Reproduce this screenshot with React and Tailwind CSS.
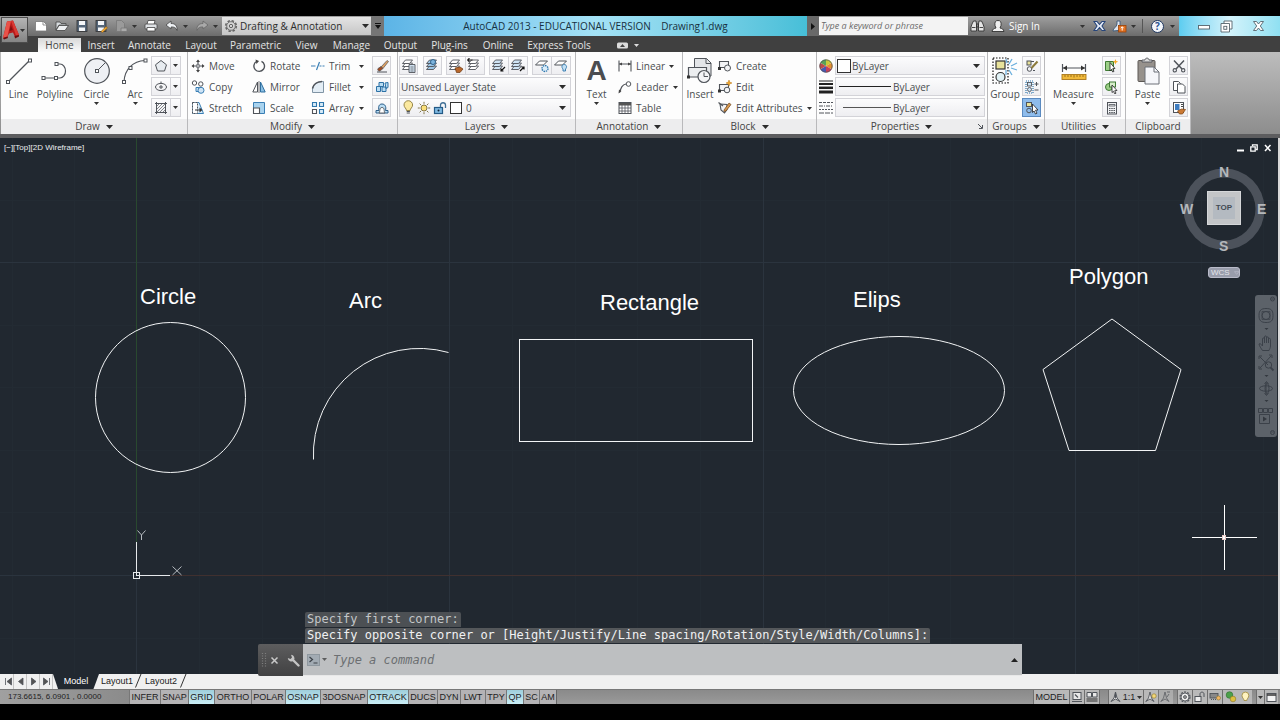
import React from "react";

/* ---------- shared pieces ---------- */

function Ico({ w = 14, h = 14, children, className = "" }) {
  return (
    <svg
      width={w}
      height={h}
      viewBox={`0 0 ${w} ${h}`}
      fill="none"
      stroke="#50545a"
      strokeWidth="1.2"
      className={`shrink-0 ${className}`}
      aria-hidden="true"
    >
      {children}
    </svg>
  );
}

function Caret({ size = "sm", className = "" }) {
  return size === "sm" ? (
    <svg width="5" height="3" viewBox="0 0 5 3" className={`shrink-0 ${className}`} aria-hidden="true">
      <path d="M0 0h5L2.500 3z" fill="#333" />
    </svg>
  ) : (
    <svg width="7" height="4" viewBox="0 0 7 4" className={`shrink-0 ${className}`} aria-hidden="true">
      <path d="M0 0h7L3.500 4z" fill="#2b2b2b" />
    </svg>
  );
}

function Panel({ title, className = "", caret = true, launcher = false, children }) {
  return (
    <section className={`flex shrink-0 flex-col border-r border-[#b9b9bb] ${className}`}>
      <div className="flex h-[67px] bg-[#fdfdfd] pt-1">{children}</div>
      <div className="flex h-[15px] items-center justify-center gap-1.5 bg-[#ededee] text-[10px] leading-[15px] text-[#444]">
        {launcher && <span className="w-2" />}
        <span className={launcher ? "ml-auto" : ""}>{title}</span>
        {caret && <Caret size="md" />}
        {launcher && (
          <button aria-label="Properties palette" className="mr-1 ml-auto">
            <Ico w={5} h={5}><path d="M0 0l4 4M4.500 1v3.500h-3.500" strokeWidth="1" /></Ico>
          </button>
        )}
      </div>
    </section>
  );
}

function Big({ label, className = "", arrow = false, children }) {
  return (
    <button className={`flex shrink-0 flex-col items-center text-[#4a4d50] ${className}`}>
      <span className="flex h-[30px] items-center justify-center">{children}</span>
      <span className="text-[10px] leading-4">{label}</span>
      {arrow && <Caret />}
    </button>
  );
}

function Row({ label, arrow = false, arrowClass = "mr-2", className = "", children }) {
  return (
    <button className={`flex h-5 items-center text-left text-[10px] whitespace-nowrap text-[#4a4d50] ${className}`}>
      <span className="mr-1 flex w-[15px] justify-center">{children}</span>
      {label}
      {arrow && <Caret className={`ml-auto ${arrowClass}`} />}
    </button>
  );
}

function Box({ label, active = false, className = "w-[19px]", children }) {
  const tone = active
    ? "border-[#5a8ac0] bg-[#8ebcec]"
    : "border-[#d3d3d8] bg-linear-to-b from-[#fcfcfd] to-[#eeeef1]";
  return (
    <button
      aria-label={label}
      title={label}
      className={`flex h-[19px] shrink-0 items-center justify-center border ${tone} ${className}`}
    >
      {children}
    </button>
  );
}

function Combo({ label, value, className = "", before }) {
  return (
    <label className={`flex h-[19px] items-center border border-[#d3d3d8] bg-linear-to-b from-[#fcfcfd] to-[#eeeef1] ${className}`}>
      {before}
      <select
        aria-label={label}
        className="min-w-0 flex-1 appearance-none bg-transparent text-[10px] leading-4 text-[#4a4d50] outline-none"
      >
        <option>{value}</option>
      </select>
      <Caret size="md" className="mr-1" />
    </label>
  );
}

const Node = ({ x, y }) => <rect x={x - 1.5} y={y - 1.5} width="3" height="3" fill="#fff" strokeWidth="1" />;

const Sheets = ({ children, fill = "#fff" }) => (
  <Ico w={16} h={16}>
    <g strokeWidth="0.900" fill={fill}>
      <path d="M1.500 11.500l3-3.500h7l-3 3.500z" />
      <path d="M1.500 8.500l3-3.500h7l-3 3.500z" />
      <path d="M1.500 5.500l3-3.500h7l-3 3.500z" />
    </g>
    {children}
  </Ico>
);

/* ---------- title bar ---------- */

function TitleBar() {
  return (
    <header className="flex h-5 items-stretch bg-linear-to-b from-[#a0a0a0] to-[#6c6c6c] text-[10px]">
      <div className="flex shrink-0 items-center gap-[7px] pl-[34px] text-white">
        <button aria-label="New">
          <Ico w={14} h={14}><path d="M1.500 2.500h8l3 3v6.500h-11z" fill="#fff" stroke="#777" strokeWidth="0.800" /><path d="M9 2.500v3.500h4" stroke="#777" strokeWidth="0.800" /></Ico>
        </button>
        <button aria-label="Open">
          <Ico w={14} h={14}><path d="M1 11V3h4l1 1.500h5V6H4z" fill="#d8dcdf" stroke="#444" strokeWidth="0.800" /><path d="M1 11.500l3-5h9.500l-3.500 5z" fill="#eef0f2" stroke="#444" strokeWidth="0.800" /></Ico>
        </button>
        <button aria-label="Save">
          <Ico w={12} h={14}><rect x="1" y="1.500" width="10" height="11" fill="#556679" stroke="#333" strokeWidth="0.800" /><path d="M3 2h6v4H3zM3 8.500h6v3.500H3z" fill="#f4f6f8" stroke="none" /></Ico>
        </button>
        <button aria-label="Save as">
          <Ico w={13} h={14}><rect x="1" y="1.500" width="10" height="11" fill="#556679" stroke="#333" strokeWidth="0.800" /><path d="M3 2h6v4H3zM3 8.500h6v3.500H3z" fill="#f4f6f8" stroke="none" /><path d="M6 12.500l5-5 1.500 1.500-5 4.500z" fill="#f1a830" stroke="#805010" strokeWidth="0.500" /></Ico>
        </button>
        <button aria-label="Cloud" className="flex items-center gap-1">
          <Ico w={13} h={14}><path d="M1.500 1.500h5l3 3v8h-8z" fill="#9a9a9a" stroke="#777" strokeWidth="0.800" /><path d="M6 9h6v3.500H6z" fill="#aaa" stroke="#777" strokeWidth="0.800" /></Ico>
          <Caret />
        </button>
        <button aria-label="Print">
          <Ico w={14} h={14}><path d="M4 1.500h7l-1 4H3z" fill="#fff" stroke="#444" strokeWidth="0.800" /><rect x="1" y="5" width="12" height="5" rx="1" fill="#dfe2e5" stroke="#444" strokeWidth="0.800" /><path d="M3 8.500h8V12H3z" fill="#fff" stroke="#444" strokeWidth="0.800" /></Ico>
        </button>
        <button aria-label="Undo" className="flex items-center gap-1">
          <Ico w={14} h={14}><path d="M1 6l5-4v2.500c4 0 6.500 2 6 7-1-3-3-3.700-6-3.500V10z" fill="#eef1f4" stroke="#444" strokeWidth="0.800" /></Ico>
          <Caret />
        </button>
        <button aria-label="Redo" className="flex items-center gap-1">
          <Ico w={14} h={14}><path d="M13 6L8 2v2.500c-4 0-6.500 2-6 7 1-3 3-3.700 6-3.500V10z" fill="#a9a9a9" stroke="#666" strokeWidth="0.800" /></Ico>
          <Caret />
        </button>
      </div>
      <label className="my-px ml-1 flex w-[149px] shrink-0 items-center bg-linear-to-b from-[#e4e4e4] to-[#c6c6c6] px-0.5 text-[#2d2d2d]">
        <Ico w={14} h={14}>
          <circle cx="7" cy="7" r="5.300" stroke="#666" strokeWidth="1.600" strokeDasharray="2.400 1.760" />
          <circle cx="7" cy="7" r="4.300" stroke="#666" strokeWidth="0.900" />
          <circle cx="7" cy="7" r="1.700" stroke="#555" strokeWidth="0.900" />
        </Ico>
        <select aria-label="Workspace" className="min-w-0 flex-1 appearance-none bg-transparent pl-0.5 text-[10px] outline-none">
          <option>Drafting &amp; Annotation</option>
        </select>
        <Caret size="md" />
      </label>
      <button aria-label="Customize toolbar" className="flex w-[13px] shrink-0 items-center justify-center bg-[#757575]">
        <svg width="6" height="7" viewBox="0 0 6 7" aria-hidden="true"><path d="M0 0h6v1H0zM0 2h6L3 6z" fill="#111" /></svg>
      </button>
      <div className="flex flex-1 items-center justify-center bg-linear-to-r from-[#5cb4e6] via-[#a4e2f6] to-[#46bfd8] whitespace-pre text-[#173040]">
        <h1 className="text-[10px]">AutoCAD 2013 - EDUCATIONAL VERSION{"    "}Drawing1.dwg</h1>
      </div>
      <button aria-label="Expand search" className="flex w-3 shrink-0 items-center justify-center bg-[#696969]">
        <svg width="4" height="7" viewBox="0 0 4 7" aria-hidden="true"><path d="M0 0v7l4-3.500z" fill="#111" /></svg>
      </button>
      <input
        aria-label="Search help"
        placeholder="Type a keyword or phrase"
        className="my-px w-[149px] shrink-0 bg-[#f3f3f3] px-0.5 text-[9px] italic outline-none placeholder:text-[#6b6b6b]"
      />
      <div className="flex shrink-0 items-center pl-0.5 text-white">
        <button aria-label="Search">
          <Ico w={15} h={14}>
            <path d="M2 5l1.500-3h2.500l.5 3v7H1V8zM13 5l-1.500-3H9l-.5 3v7H14V8z" fill="#e4e4e4" stroke="#333" strokeWidth="0.900" />
            <path d="M6.500 5h2v3h-2zM2 8.500h3.500M9.500 8.500H13" stroke="#333" strokeWidth="0.900" />
          </Ico>
        </button>
        <button className="ml-1.5 flex items-center gap-1 text-[10px] whitespace-nowrap">
          <Ico w={14} h={14}>
            <path d="M1 12.500c.5-2.500 2-3 4-3.500L4 6.500C3.500 3 4.500 1.500 7 1.500s3.500 1.500 3 5L9 9c2 .500 3.500 1 4 3.500z" fill="#f0f0f0" stroke="#333" strokeWidth="0.900" />
          </Ico>
          Sign In
          <Caret className="ml-9" />
        </button>
        <button aria-label="Exchange" className="ml-2">
          <Ico w={13} h={14}><path d="M1 2.500h3l2.500 3 2.500-3h3L9 7l3 4.500H9l-2.500-3-2.500 3H1L4 7z" fill="#e6edf8" stroke="#27457a" strokeWidth="1.100" /></Ico>
        </button>
        <button aria-label="Autodesk 360" className="ml-1.5 flex items-center gap-1">
          <Ico w={15} h={14}>
            <path d="M1 12c0-3 4-4 4-7V2h3v5l3 4z" fill="#dfe6ee" stroke="#3c5878" strokeWidth="0.900" />
            <rect x="6.500" y="6.500" width="7.500" height="6.500" fill="#e27222" stroke="#9b4308" strokeWidth="0.800" />
            <path d="M10.200 8v3.500M8.800 9.200l1.400-1.500 1.400 1.500" stroke="#fff" strokeWidth="1" />
          </Ico>
          <Caret />
        </button>
        <span className="mr-2 ml-1.5 h-3.5 w-px bg-[#555]" />
        <button aria-label="Help" className="flex items-center gap-1.5">
          <span className="flex size-[13px] items-center justify-center rounded-full border border-[#20375f] bg-[#f3f6fb] text-[10px] leading-none font-bold text-[#2a5292]">?</span>
          <Caret />
        </button>
      </div>
      <div className="ml-1 flex w-[101px] shrink-0 items-center justify-end bg-linear-to-r from-[#5ccdf0] via-[#d3f3fb] to-[#8fe0f2]">
        <button aria-label="Minimize" className="flex w-6 items-center justify-center">
          <Ico w={12} h={12}><rect x="0.500" y="5.500" width="11" height="3.500" fill="#fff" stroke="#55636c" strokeWidth="0.900" /></Ico>
        </button>
        <button aria-label="Restore" className="flex w-5 items-center justify-center">
          <Ico w={13} h={13}>
            <path d="M4 1h8v8H4z" fill="#fff" stroke="#55636c" strokeWidth="0.900" />
            <path d="M1 3.500h8.500V12H1z" fill="#fff" stroke="#55636c" strokeWidth="0.900" />
            <rect x="3.800" y="6.300" width="3" height="3" stroke="#55636c" strokeWidth="0.900" />
          </Ico>
        </button>
        <button aria-label="Close" className="flex w-11 items-center justify-center">
          <Ico w={13} h={12}>
            <path d="M1.500 1.500h3l2 2.500 2-2.500h3L8.300 6l3.200 4.500h-3l-2-2.500-2 2.500h-3L4.700 6z" fill="#fff" stroke="#55636c" strokeWidth="0.900" />
          </Ico>
        </button>
      </div>
    </header>
  );
}

/* ---------- menu tabs ---------- */

const MENU = [
  ["Insert", "w-[40px]"],
  ["Annotate", "w-[57px]"],
  ["Layout", "w-[46px]"],
  ["Parametric", "w-[63px]"],
  ["View", "w-[39px]"],
  ["Manage", "w-[51px]"],
  ["Output", "w-[47px]"],
  ["Plug-ins", "w-[51px]"],
  ["Online", "w-[46px]"],
  ["Express Tools", "w-[76px]"],
];

function MenuTabs() {
  return (
    <nav className="flex h-4 items-end bg-[#404040] pl-[38px] text-[10px] leading-[14px] text-[#e4e4e4]">
      <button className="h-3.5 w-[43px] bg-linear-to-b from-[#d8d8d8] to-[#fbfbfb] text-[#444]">Home</button>
      {MENU.map(([name, w]) => (
        <button key={name} className={`h-3.5 text-center whitespace-nowrap ${w}`}>{name}</button>
      ))}
      <button aria-label="Minimize ribbon" className="ml-5 flex h-3.5 items-center gap-1.5">
        <Ico w={11} h={7}><rect width="11" height="6" y="0.500" rx="1.500" fill="#dcdcdc" stroke="none" /><path d="M3 5l2.500-3L8 5z" fill="#444" stroke="none" /></Ico>
        <svg width="5" height="3" viewBox="0 0 5 3" aria-hidden="true"><path d="M0 0h5L2.500 3z" fill="#ddd" /></svg>
      </button>
    </nav>
  );
}

/* ---------- ribbon ---------- */

function DropBox({ label, children }) {
  return (
    <div className="flex">
      <Box label={label} className="w-5">{children}</Box>
      <Box label={`${label} options`} className="-ml-px w-[11px]"><Caret /></Box>
    </div>
  );
}

function Ribbon() {
  return (
    <div className="border-b-4 border-[#5d5d5f]">
      <div className="flex bg-linear-to-b from-[#bdbdbd] to-[#8d8d8d] pl-px">
        <Panel title="Draw" className="w-[187px]">
          <Big label="Line" className="w-[35px]">
            <Ico w={28} h={28}><path d="M3.500 24.500l21-21" /><Node x={3} y={25} /><Node x={25} y={3.5} /></Ico>
          </Big>
          <Big label="Polyline" className="w-[38px]">
            <Ico w={28} h={28}><path d="M2 21h17a5.500 7 0 0 0 0-14h-3" /><Node x={2.5} y={21} /><Node x={15} y={21} /><Node x={15.5} y={7} /></Ico>
          </Big>
          <Big label="Circle" arrow className="w-[45px]">
            <Ico w={28} h={28}><circle cx="14" cy="14" r="12.300" fill="#eef0f4" /><path d="M14 14l8-8" strokeWidth="1" /><Node x={14} y={14} /></Ico>
          </Big>
          <Big label="Arc" arrow className="w-[32px]">
            <Ico w={28} h={28}><path d="M3 25C3.500 12 12 4 24 3.500" /><Node x={3} y={25} /><Node x={9.5} y={11} /><Node x={24.5} y={3.5} /></Ico>
          </Big>
          <div className="flex flex-col gap-0.5">
            <DropBox label="Polygon">
              <Ico w={14} h={14}><path d="M7 1.500l5.500 4.300-2 6.200h-7l-2-6.200z" fill="#e8ecf0" strokeWidth="1" /></Ico>
            </DropBox>
            <DropBox label="Ellipse">
              <Ico w={14} h={14}><ellipse cx="7" cy="7" rx="5.500" ry="3.600" strokeWidth="1" /><path d="M7 5v4M5 7h4M7 1.500v2" strokeWidth="1" /></Ico>
            </DropBox>
            <DropBox label="Hatch">
              <Ico w={14} h={14}><path d="M2.500 1v12M11.500 1v12M1 2.500h12M1 11.500h12" strokeWidth="1" /><path d="M3 5l2-2M3 8l5-5M3 11l8-8M6 11l5-5M9 11l2-2" strokeWidth="0.700" /></Ico>
            </DropBox>
          </div>
        </Panel>

        <Panel title="Modify" className="w-[210px]">
          <div className="grid w-full grid-cols-[61px_59px_62px_1fr] pl-0.5">
            <Row label="Move">
              <Ico w={14} h={14}><path d="M7 1.500v4M7 8.500v4M1.500 7h4M8.500 7h4" strokeWidth="1.200" /><path d="M5 3l2-2.500L9 3zM5 11l2 2.500L9 11zM3 5L.500 7 3 9zM11 5l2.500 2L11 9z" fill="#444" stroke="none" /><rect x="5.800" y="5.800" width="2.400" height="2.400" fill="#fff" strokeWidth="0.900" /></Ico>
            </Row>
            <Row label="Rotate">
              <Ico w={14} h={14}><path d="M4.500 2.500A5.300 5.300 0 1 0 9.500 2.300" strokeWidth="1.400" /><path d="M3.500 0.500l3.500 1.500-2.500 3z" fill="#444" stroke="none" /></Ico>
            </Row>
            <Row label="Trim" arrow>
              <Ico w={14} h={14}><path d="M0 7h4.500M5.500 11l3-8" strokeWidth="1.200" stroke="#3a7fb5" /><path d="M8.500 7H14" strokeDasharray="2 1" stroke="#3a7fb5" /></Ico>
            </Row>
            <Box label="Erase">
              <Ico w={14} h={14}><path d="M6 8l6-6.500 1.500 1L8 9.500z" fill="#e0a060" strokeWidth="0.700" /><path d="M3 9.500L6 7.500l2 2-3 2.500c-1.500.500-3-1-2-2.500z" fill="#a04a20" strokeWidth="0.700" /><path d="M2 13h10" strokeWidth="1" /></Ico>
            </Box>
            <Row label="Copy">
              <Ico w={14} h={14}><circle cx="3.500" cy="3" r="2.200" strokeWidth="1" /><circle cx="9.800" cy="4" r="2.200" strokeWidth="1" /><path d="M5 7.500h4v4H5z" fill="#cfe4f5" stroke="#3a7fb5" strokeWidth="1" /><circle cx="10" cy="10.300" r="3" fill="#cfe4f5" stroke="#3a7fb5" strokeWidth="1" /></Ico>
            </Row>
            <Row label="Mirror">
              <Ico w={14} h={14}><path d="M5.500 2v10H.800z" fill="#fff" strokeWidth="1" /><path d="M8.500 2v10h4.700z" fill="#8bbfe4" stroke="#2f6f9f" strokeWidth="1" /><path d="M7 1v12" strokeWidth="0.800" /></Ico>
            </Row>
            <Row label="Fillet" arrow>
              <Ico w={14} h={14}><path d="M1.500 12.500V9C2 4 6 1.500 12.500 1.500v11z" fill="#e3edf5" stroke="#8094a4" strokeWidth="1" /><path d="M1.500 8.500C2.500 4 6 1.800 11 1.500" strokeWidth="1.500" /></Ico>
            </Row>
            <Box label="Explode">
              <Ico w={14} h={14}><path d="M1.500 6.500h4v5h-4zM4 2.500h4.500v4H4zM7 7h4v4.500H7zM10 3l3-.5v5l-2 1z" fill="#b9dcf3" stroke="#2c71a6" strokeWidth="1" /></Ico>
            </Box>
            <Row label="Stretch">
              <Ico w={14} h={14}><path d="M1.500 1.500H8l4.500 11h-11z" fill="#d8ebf8" stroke="#3a7fb5" strokeWidth="1" /><path d="M1.500 1.500h5v11h-5z" fill="#fff" strokeDasharray="2 1" strokeWidth="1" /><path d="M4 9h5" /><path d="M8.500 6.500l3 2.500-3 2.500z" fill="#333" stroke="none" /></Ico>
            </Row>
            <Row label="Scale">
              <Ico w={14} h={14}><path d="M1.500 1.500h11v11h-11z" fill="#a8d3ef" stroke="#3a7fb5" strokeWidth="1" /><path d="M1.500 7h6v5.500h-6z" fill="#fff" strokeWidth="1.100" /></Ico>
            </Row>
            <Row label="Array" arrow>
              <Ico w={14} h={14}><path d="M1.500 1.500h4v4h-4zM8.500 1.500h4v4h-4z" stroke="#2f77ad" strokeWidth="1.100" fill="#d8ebf8" /><path d="M8.500 8.500h4v4h-4z" stroke="#2f77ad" strokeWidth="1.100" fill="#d8ebf8" /><path d="M1.500 8.500h4v4h-4z" strokeWidth="1.100" fill="#fff" /></Ico>
            </Row>
            <Box label="Offset">
              <Ico w={14} h={14}><path d="M1 12h12V9.500h-2.500c1-4-.5-6.500-3.500-6.500S3 5.500 4 9.500H1z" fill="#b9dcf3" stroke="#2c5f8a" strokeWidth="1" /><path d="M4 12h6c-1.500-2 0-5.500-3-5.500S5.500 10 4 12z" fill="#fff" strokeWidth="0.900" /></Ico>
            </Box>
          </div>
        </Panel>

        <Panel title="Layers" className="w-[178px]">
          <div className="flex w-full flex-col gap-0.5 pr-1 pl-px">
            <div className="flex">
              <Box label="Layer properties" className="w-[19px]"><Sheets><path d="M8 6.500h6v8H8z" fill="#cfe0ef" strokeWidth="0.900" /><path d="M9.500 9h3M9.500 11h3M9.500 13h3" strokeWidth="0.700" /></Sheets></Box>
              <Box label="Make current" className="ml-[5px] w-[19px]"><Sheets fill="#9cc6e6"><circle cx="8" cy="4" r="2.500" fill="#7db4dd" stroke="#285c87" strokeWidth="0.900" /></Sheets></Box>
              <Box label="Match layer" className="ml-1 w-5"><Sheets><path d="M7 10l5-1 3 2-3 3.500H8.500z" fill="#b8672c" stroke="#6a3810" strokeWidth="0.700" /></Sheets></Box>
              <Box label="Previous layer" className="-ml-px w-5"><Sheets><path d="M0.500 2h5M0.500 2l2-1.800M.5 2l2 1.800" stroke="#222" /></Sheets></Box>
              <Box label="Layer isolate" className="ml-1 w-5"><Sheets fill="#cfe4f5"><path d="M14 9l-4 4M10 10.500V13h2.500" stroke="#111" /></Sheets></Box>
              <Box label="Layer unisolate" className="-ml-px w-5"><Sheets fill="#cfe4f5"><path d="M10 13l4-4M11.500 9H14v2.500" stroke="#111" /></Sheets></Box>
              <Box label="Layer freeze" className="ml-1 w-5"><Ico w={16} h={16}><path d="M1.500 7l4-4h8l-4 4z" fill="#fff" strokeWidth="1" /><circle cx="11" cy="10.500" r="3" fill="#dceefa" stroke="#2f77ad" strokeDasharray="1.500 0.800" strokeWidth="1.400" /></Ico></Box>
              <Box label="Layer off" className="-ml-px w-5"><Ico w={16} h={16}><path d="M1.500 7l4-4h8l-4 4z" fill="#fff" strokeWidth="1" /><path d="M10 13v-2c-2-2-1-4.500 1.200-4.500s3.300 2.500 1.300 4.500v2z" fill="#c4e0f4" stroke="#2f77ad" strokeWidth="0.900" /></Ico></Box>
            </div>
            <Combo label="Layer state" value="Unsaved Layer State" className="pl-px" />
            <Combo
              label="Layer"
              value="0"
              before={
                <span className="mr-1 flex items-center gap-0.5 pl-0.5">
                  <Ico w={13} h={15}><path d="M4.500 10.500c0-2-2.500-3-2.500-5.500a4.300 4.300 0 0 1 8.600 0c0 2.500-2.500 3.500-2.500 5.500z" fill="#fbe9a0" stroke="#8c7a3a" strokeWidth="0.900" /><path d="M4.700 11.500h3.200M4.700 13h3.200" strokeWidth="1" /></Ico>
                  <Ico w={14} h={14}><circle cx="7" cy="7" r="3" fill="#fbe07a" stroke="#776a3a" strokeWidth="0.900" /><path d="M7 .8v2M7 11.200v2M.8 7h2M11.200 7h2M2.600 2.600l1.400 1.400M10 10l1.400 1.400M2.600 11.400L4 10M10 4l1.400-1.400" stroke="#776a3a" strokeWidth="0.900" /></Ico>
                  <Ico w={15} h={14}><rect x="1.500" y="6.500" width="8" height="6" fill="#7fb9e2" stroke="#245a86" /><path d="M7.500 6.500V4c0-3 5-3 5 0v3" stroke="#3f6f95" strokeWidth="1.300" /><circle cx="5.500" cy="9.500" r="1" fill="#123" stroke="none" /></Ico>
                  <span className="size-3 border border-[#333] bg-white" />
                </span>
              }
            />
          </div>
        </Panel>

        <Panel title="Annotation" className="w-[107px]">
          <Big label="Text" arrow className="w-[41px]">
            <span className="font-['Liberation_Sans',sans-serif] text-[28px] leading-7 font-bold text-[#4b4d50]">A</span>
          </Big>
          <div className="flex flex-1 flex-col gap-px">
            <Row label="Linear" arrow className="w-full"><Ico w={14} h={14}><path d="M1 1.500v11M13 1.500v11M1 5h12" strokeWidth="1.100" /><path d="M1 5l3-1.500v3zM13 5l-3-1.500v3z" fill="#444" stroke="none" /></Ico></Row>
            <Row label="Leader" arrow arrowClass="mr-1" className="w-full"><Ico w={14} h={14}><path d="M1.500 12.500C3 8 4 4.500 8 4" strokeWidth="1.200" /><path d="M0.500 13.500l.5-4 2.500 1.500z" fill="#444" stroke="none" /><circle cx="10.500" cy="4" r="2.300" strokeWidth="1" /></Ico></Row>
            <Row label="Table"><Ico w={14} h={14}><rect x="1" y="1.500" width="12" height="11" fill="#fff" strokeWidth="1" /><path d="M1 2h12v2.500H1z" fill="#555" stroke="none" /><path d="M4 4v8.500M7 4v8.500M10 4v8.500M1 7h12M1 10h12" strokeWidth="0.800" /></Ico></Row>
          </div>
        </Panel>

        <Panel title="Block" className="w-[134px]">
          <Big label="Insert" className="w-[34px]">
            <Ico w={28} h={28}><path d="M8.500 1.500h12l4.500 4.500v13H8.500z" fill="#e3e5e8" strokeWidth="1" /><path d="M20 1.500v5h5" strokeWidth="1" /><path d="M2.500 10.500h18V20h-18z" fill="#eceef0" /><circle cx="18" cy="19.500" r="6" fill="#f3f4f6" /><path d="M18 19.500v-4M18 19.500h4" strokeWidth="1" /><rect x="1" y="18.500" width="3" height="3" fill="#333" stroke="none" /></Ico>
          </Big>
          <div className="flex flex-1 flex-col gap-px">
            <Row label="Create"><Ico w={14} h={14}><path d="M1.500 2.500h9v6h-9z" fill="#f3f4f6" strokeWidth="1.100" /><circle cx="9.500" cy="9" r="3" fill="#f3f4f6" strokeWidth="1" /><rect y="8" width="3" height="3" fill="#333" stroke="none" /></Ico></Row>
            <Row label="Edit"><Ico w={14} h={14}><path d="M1.500 4.500h9v6h-9z" fill="#f3f4f6" strokeWidth="1.100" /><circle cx="9" cy="10" r="2.800" fill="#f3f4f6" strokeWidth="1" /><path d="M11 0l.8 2.200L14 3l-2.200.8L11 6l-.8-2.200L8 3l2.200-.8z" fill="#f5a623" stroke="#b87410" strokeWidth="0.500" /><rect y="9.500" width="3" height="3" fill="#333" stroke="none" /></Ico></Row>
            <Row label="Edit Attributes" arrow arrowClass="mr-1" className="w-full"><Ico w={14} h={14}><path d="M2 3l7 .5v5L6.500 12 3 9z" fill="#f3f4f6" strokeWidth="1.100" /><path d="M0.500 1.500L5 5" strokeWidth="1.200" /><path d="M6 9l5-7 2 1.500-5 6.500-2 .5z" fill="#d99a50" stroke="#6b431b" strokeWidth="0.700" /></Ico></Row>
          </div>
        </Panel>

        <Panel title="Properties" launcher className="w-[171px]">
          <div className="grid w-full grid-cols-[16px_1fr] content-start items-center gap-y-0.5 pr-0.5 pl-0.5">
            <Ico w={14} h={14}>
              <g stroke="none">
                <path d="M7 7V0.500a6.500 6.500 0 0 1 5.600 3.250z" fill="#c9c93a" /><path d="M7 7l5.600-3.250a6.500 6.500 0 0 1 0 6.500z" fill="#e6912c" /><path d="M7 7l5.600 3.250A6.500 6.500 0 0 1 7 13.500z" fill="#c8405a" /><path d="M7 7v6.500a6.500 6.500 0 0 1-5.600-3.250z" fill="#4658b4" /><path d="M7 7l-5.600 3.250a6.500 6.500 0 0 1 0-6.500z" fill="#c04a48" /><path d="M7 7L1.400 3.750A6.500 6.500 0 0 1 7 .5z" fill="#58a058" />
              </g>
              <circle cx="7" cy="7" r="6.200" strokeWidth="0.800" />
            </Ico>
            <Combo label="Color" value="ByLayer" before={<span className="mr-px ml-px size-3.5 border border-[#333] bg-white" />} />
            <Ico w={14} h={14}><path d="M0 1h14" stroke="#222" strokeWidth="1" /><path d="M0 4h14" stroke="#222" strokeWidth="2" /><path d="M0 7.800h14" stroke="#222" strokeWidth="2.500" /><path d="M0 12h14" stroke="#222" strokeWidth="3" /></Ico>
            <Combo label="Lineweight" value="ByLayer" before={<span className="mr-0.5 ml-[3px] h-px w-[52px] bg-[#222]" />} />
            <Ico w={14} h={14}><path d="M0 1.500h14" strokeDasharray="3 1" strokeWidth="1" /><path d="M0 5h14" strokeDasharray="4 1 1 1" strokeWidth="1" /><path d="M0 8.500h14" strokeDasharray="2 1" strokeWidth="1" /><path d="M0 12h14" strokeDasharray="5 1" strokeWidth="1" /></Ico>
            <Combo label="Linetype" value="ByLayer" before={<span className="mr-0.5 ml-[7px] h-px w-12 bg-[#555]" />} />
          </div>
        </Panel>

        <Panel title="Groups" className="w-[57px]">
          <Big label="Group" className="w-[34px]">
            <Ico w={28} h={28}>
              <rect x="2" y="1" width="15" height="25" stroke="#111" strokeDasharray="1.500 1.500" />
              <rect x="5" y="4" width="9" height="8" fill="#e8e29a" stroke="#333" />
              <circle cx="9.500" cy="20" r="4.500" fill="#e1f2f6" stroke="#333" />
              <path d="M18 7l3-5M20 9l6-3M20 11l6 2M18 13l3 5M16 6l-1-4M15 13v5" stroke="#6cb0de" strokeWidth="1.300" />
            </Ico>
          </Big>
          <div className="flex flex-col gap-0.5">
            <Box label="Ungroup"><Ico><rect x="2" y="2" width="4" height="4" fill="#e8e29a" strokeWidth="1" /><circle cx="4.500" cy="10" r="2.300" strokeWidth="1" /><path d="M6.500 9l6-6.500" stroke="#8c7a3a" strokeWidth="2" /><path d="M6 2.500h3M8 11.500h2" strokeWidth="1" /></Ico></Box>
            <Box label="Group edit"><Ico><rect x="1" y="1" width="7" height="12" stroke="#2f77ad" strokeDasharray="1 1" /><rect x="2.500" y="2.500" width="4" height="3.500" fill="#cfe4f5" strokeWidth="0.900" /><circle cx="4.500" cy="9.500" r="2" fill="#cfe4f5" strokeWidth="0.900" /><path d="M9.500 4h4M11.500 2v4M9.500 10h4" strokeWidth="1" /></Ico></Box>
            <Box label="Group selection" active><Ico><rect x="1.500" y="1.500" width="5" height="4" fill="#e8e29a" strokeWidth="1" /><circle cx="4" cy="9.500" r="2.300" strokeWidth="1" /><path d="M7.500 3l5.500 6-2.500.2 1.500 3-1.500.8-1.400-3-1.600 1.500z" fill="#fff" stroke="#222" strokeWidth="0.800" /></Ico></Box>
          </div>
        </Panel>

        <Panel title="Utilities" className="w-[81px]">
          <Big label="Measure" arrow className="w-[57px]">
            <Ico w={28} h={28}><path d="M2.500 7v8M25.500 7v8M3 11h22" /><path d="M3 11l4-2.500v5zM25 11l-4-2.500v5z" fill="#333" stroke="none" /><rect x="2" y="17.500" width="24" height="5" fill="#f0b93a" stroke="#a9771a" strokeWidth="0.900" /><path d="M5 18v2M8 18v2M11 18v2M14 18v2.500M17 18v2M20 18v2M23 18v2" stroke="#7a5510" strokeWidth="0.700" /></Ico>
          </Big>
          <div className="flex flex-col gap-0.5">
            <Box label="Quick select"><Ico w={15}><path d="M1.500 2.500h8v9h-8z" fill="#9ccf87" stroke="#3f7a34" strokeWidth="1" /><path d="M6 3.500l5 6-2.300.2 1.300 2.700-1.300.6-1.200-2.700L6 12z" fill="#fff" stroke="#222" strokeWidth="0.800" /><path d="M11.500 0l.7 2 2 .7-2 .8-.7 2-.8-2-2-.8 2-.7z" fill="#f5a623" stroke="none" /></Ico></Box>
            <Box label="Select all"><Ico w={15}><circle cx="5" cy="7" r="3.500" fill="#9ccf87" stroke="#3f7a34" strokeWidth="1" /><rect x="5.500" y="2" width="6" height="5" fill="#d5ecc9" stroke="#3f7a34" strokeWidth="1" /><path d="M8 5l5 5.500-2.300.2 1.300 2.500-1.300.6-1.200-2.500L8 12.500z" fill="#fff" stroke="#222" strokeWidth="0.800" /></Ico></Box>
            <Box label="Calculator"><Ico><rect x="2.500" y="1.500" width="9" height="11.500" fill="#f1f2f4" strokeWidth="1" /><path d="M4 3.500h6v1.500H4z" strokeWidth="0.800" /><path d="M4 7.500h6M4 9.500h6M4 11.500h6" strokeDasharray="1.500 0.750" strokeWidth="1.100" /></Ico></Box>
          </div>
        </Panel>

        <Panel title="Clipboard" caret={false} className="w-[65px]">
          <Big label="Paste" arrow className="w-[43px]">
            <Ico w={28} h={28}><rect x="4" y="3.500" width="17" height="21" rx="1" fill="#96918c" stroke="#5c5854" strokeWidth="1" /><path d="M8 5V3h3c0-2.500 4-2.500 4 0h3v2z" fill="#d9d9d9" strokeWidth="0.900" /><path d="M11 10h9l5 5v12H11z" fill="#f5f6fa" stroke="#6c7078" strokeWidth="1" /><path d="M20 10v5h5" stroke="#6c7078" strokeWidth="1" /></Ico>
          </Big>
          <div className="flex flex-col gap-0.5">
            <Box label="Cut"><Ico><path d="M2 1.500l8 8.500M12 1.500L4 10" strokeWidth="1.500" /><circle cx="2.800" cy="11.300" r="1.700" strokeWidth="1.100" /><circle cx="11.200" cy="11.300" r="1.700" strokeWidth="1.100" /></Ico></Box>
            <Box label="Copy clip"><Ico><path d="M1.500 1.500h5l2 2v7h-7z" fill="#fff" strokeWidth="1" /><path d="M5.500 4h5l2.500 2.500V13H5.500z" fill="#fff" strokeWidth="1" /></Ico></Box>
            <Box label="Match properties"><Ico><rect x="1.500" y="1.500" width="10" height="10" fill="#fff" strokeWidth="1" /><path d="M3 3h4.500v6H3z" fill="#3e7cc0" stroke="none" /><path d="M9 3.500h2M9 5.500h2" stroke="#333" strokeWidth="0.900" /><path d="M5.500 10l4-2 4 .5-3 4.500H7.500z" fill="#cb7a35" stroke="#7a4412" strokeWidth="0.700" /></Ico></Box>
          </div>
        </Panel>
      </div>
    </div>
  );
}

/* ---------- drawing area ---------- */

const LABELS = [
  ["Circle", "left-[140px] top-[147px]"],
  ["Arc", "left-[349px] top-[151px]"],
  ["Rectangle", "left-[600px] top-[153px]"],
  ["Elips", "left-[853px] top-[150px]"],
  ["Polygon", "left-[1069px] top-[127px]"],
];

const MINOR_X = [12, 74, 199, 262, 324, 387, 512, 575, 637, 700, 825, 888, 950, 1013, 1138, 1201, 1263];
const MINOR_Y = [62, 187, 249, 312, 374, 500];

function Drawing() {
  return (
    <svg width="1280" height="536" className="absolute top-0 left-0" fill="none" aria-label="Model space drawing">
      <g shapeRendering="crispEdges" strokeWidth="1">
        {MINOR_X.map((x) => <path key={x} d={`M${x}.5 0V536`} stroke="#232b33" />)}
        {MINOR_Y.map((y) => <path key={y} d={`M0 ${y}.5H1280`} stroke="#232b33" />)}
        <path d="M449.500 0V536M763.500 0V536M1075.500 0V536M0 124.500H1280M0 437.500H136M136.500 437V536" stroke="#2b343e" />
        <path d="M136.500 0V404" stroke="#29492f" />
        <path d="M170 437.500H1280" stroke="#40302f" />
      </g>
      <g stroke="#f2f4f5" strokeWidth="1">
        <circle cx="170.500" cy="259.500" r="75" />
        <path d="M313.500 321.500A106 106 0 0 1 448.500 214.500" />
        <rect x="519" y="201" width="233.500" height="102" shapeRendering="crispEdges" />
        <ellipse cx="899" cy="252.500" rx="105.500" ry="54" />
        <path d="M1112 181l69 50.500-25.500 81h-86.500l-26-81z" />
      </g>
      <g stroke="#e6e9eb" strokeWidth="1">
        <path d="M136.500 404V434M140 437.500H170M133.500 434.500h6v6h-6zM136.500 435v2.500h3" shapeRendering="crispEdges" />
        <path d="M137.500 392.500l4 4.500 4-4.500M141.500 397v5M172.500 428.500l9 8.500M181.500 428.500l-9 8.500" stroke="#b6bbc0" />
      </g>
      <g stroke="#fff" shapeRendering="crispEdges">
        <path d="M1191.500 399.500H1222M1226 399.500H1257M1224.500 367V397M1224.500 402V432" />
        <path d="M1222.500 397.500h3v4h-3z" stroke="#e8c9c4" fill="#fff" />
      </g>
    </svg>
  );
}

function ViewCube() {
  return (
    <div className="absolute top-6 right-2.5 flex w-[90px] flex-col items-center">
      <div className="relative grid size-[90px] place-items-center font-['Liberation_Sans',sans-serif] text-[14px] leading-none font-bold text-[#b5b8bb]">
        <svg width="90" height="90" viewBox="0 0 90 90" className="absolute inset-0" fill="none" aria-hidden="true">
          <circle cx="46" cy="47" r="36" stroke="#4c525b" strokeWidth="9" />
        </svg>
        <span className="absolute top-[3px] left-[41px]">N</span>
        <span className="absolute top-10 left-0.5">W</span>
        <span className="absolute top-10 left-[79px]">E</span>
        <span className="absolute top-[77px] left-[41px]">S</span>
        <button className="relative mt-0.5 ml-0.5 grid size-[34px] place-items-center border border-[#d5d7d9] bg-[#c3c5c7]">
          <span className="grid size-[22px] place-items-center bg-[#b4bac1] text-[8px] text-[#414a54]">TOP</span>
        </button>
      </div>
      <button className="mt-[15px] ml-0.5 flex h-[11px] w-8 items-center gap-1 rounded-[3px] border border-[#b9bbc9] bg-[#999dab] pl-0.5 font-['Liberation_Sans',sans-serif] text-[8px] leading-none text-[#e3e4ea]">
        WCS
        <svg width="6" height="4" viewBox="0 0 6 4" fill="none" aria-hidden="true"><path d="M0.500 .5h5L3 3.500z" stroke="#b9bbc9" strokeWidth="0.800" /></svg>
      </button>
    </div>
  );
}

function NavBar() {
  return (
    <div className="absolute top-[157px] right-px w-[22px] rounded-[3px] bg-[#5c6269]">
      <svg width="22" height="142" viewBox="0 0 22 142" fill="none" stroke="#3b4149" strokeWidth="1" role="img" aria-label="Navigation bar">
        <circle cx="17.500" cy="4" r="2" /><path d="M16.500 3l2 2M18.500 3l-2 2" strokeWidth="0.600" />
        <path d="M11 13.500c5 0 7 1.500 7 7s-2 7-7 7-7-2-7-7 2-7 7-7z" /><circle cx="11" cy="20.500" r="4" /><path d="M7 16.500h8v8H7z" strokeWidth="0.700" />
        <path d="M9.500 33h4l-2 2zM9.500 80h4l-2 2zM9.500 105h4l-2 2z" fill="#33383f" stroke="none" />
        <path d="M7.500 55.500C6 53 4.500 51.500 4 49c1-1 2.500.5 3.500 2V44c0-1.500 2-1.500 2 0v4-6c0-1.500 2-1.500 2 0v6-5c0-1.500 2-1.500 2 0v5-3.500c0-1.500 2-1.500 2 0V51c0 2-1 3-1.500 4.500z" />
        <path d="M5 62l8 8M16 61L5 73M4 61h3M4 61v3M17 60h-3M17 60v3M4 74v-3M4 74h3" /><circle cx="13.500" cy="70" r="3.200" /><path d="M15.500 72.500l3 3" strokeWidth="1.800" />
        <path d="M11 87v13M9.500 89l2-2.500 2 2.500M9.500 98l2 2.500 2-2.500" /><ellipse cx="11" cy="93.500" rx="6.500" ry="2.700" /><ellipse cx="12" cy="93.500" rx="2" ry="5" />
        <path d="M3.500 113.500h4v4h-4zM8.500 113.500h4v4h-4zM13.500 113.500h4v4h-4zM4.500 119.500h10v9h-10z" /><path d="M8 121.500v5l4-2.500z" fill="#33383f" stroke="none" />
        <circle cx="17.500" cy="137.500" r="2" /><path d="M16 137h3" strokeWidth="0.800" />
      </svg>
    </div>
  );
}

function CommandLine() {
  return (
    <div className="absolute right-[256px] -bottom-0.5 left-[258px] z-10 font-['DejaVu_Sans_Mono',monospace] text-[12px]">
      <div className="flex flex-col items-start gap-px pb-px pl-[47px] leading-[15px] whitespace-nowrap">
        <p className="rounded-t-xs bg-[#4c5054] px-0.5 text-[#c3c6c8]">Specify first corner:</p>
        <p className="rounded-t-xs bg-[#54575a] px-0.5 text-[#f0f1f2]">
          Specify opposite corner or [Height/Justify/Line spacing/Rotation/Style/Width/Columns]:
        </p>
      </div>
      <form className="flex h-8" onSubmit={(e) => e.preventDefault()}>
        <div className="flex w-[45px] items-center rounded-l-xs bg-linear-to-b from-[#5d5d5e] to-[#414142] pl-[3px]">
          <Ico w={6} h={14}><path d="M1.500 0v14M4.500 0v14" stroke="#7e7e7e" strokeDasharray="1 1.500" /></Ico>
          <button type="button" aria-label="Close command line" className="ml-[3px]">
            <Ico w={9} h={9}><path d="M1.500 1.500l6 6M7.500 1.500l-6 6" stroke="#c9c9c9" strokeWidth="1.500" /></Ico>
          </button>
          <button type="button" aria-label="Customize" className="ml-2">
            <Ico w={13} h={13}><path d="M6 6l5.500 5.500" stroke="#c4c4c4" strokeWidth="2.400" strokeLinecap="round" /><path d="M4 .8L5 3.500 3.500 5 .8 4A3.600 3.600 0 0 0 6.800 6.500 3.600 3.600 0 0 0 4 .8z" fill="#c4c4c4" stroke="none" /></Ico>
          </button>
        </div>
        <label className="flex flex-1 items-center border-b border-[#e8e8e8] bg-[#bdbfc1] pl-1">
          <Ico w={13} h={12}><rect x="0.500" y="0.500" width="12" height="11" fill="#a2abb3" stroke="#8f989f" strokeWidth="1" /><path d="M2.500 3l3 2.500-3 2.500M6.500 9h4" stroke="#3c4248" /></Ico>
          <Caret className="mx-0.5 opacity-70" />
          <input
            aria-label="Command"
            placeholder="Type a command"
            className="ml-1 min-w-0 flex-1 bg-transparent italic outline-none placeholder:text-[#6c6f72]"
          />
          <svg width="7" height="4" viewBox="0 0 7 4" className="mr-1" aria-hidden="true"><path d="M0 4h7L3.500 0z" fill="#222" /></svg>
        </label>
      </form>
    </div>
  );
}

function Canvas() {
  return (
    <main className="relative min-h-[536px] flex-1 border-r-2 border-[#d8d8d8] bg-[#212830] font-['Liberation_Sans',sans-serif]">
      <div className="absolute inset-0 overflow-hidden">
        <Drawing />
        <p className="absolute top-[5px] left-1 text-[8px] leading-[10px] text-[#eceeef]">[−][Top][2D Wireframe]</p>
        {LABELS.map(([t, pos]) => (
          <p key={t} className={`absolute text-[22px] leading-6 text-white ${pos}`}>{t}</p>
        ))}
        <div className="absolute top-1.5 right-1.5 flex items-center gap-1.5">
          <button aria-label="Minimize drawing"><Ico w={7} h={8}><path d="M0 6.500h7" stroke="#fff" strokeWidth="2" /></Ico></button>
          <button aria-label="Restore drawing"><Ico w={8} h={8}><path d="M2.500 2V.8h4.700v4.700H6M.8 2.800h4.400v4.400H.8z" stroke="#fff" strokeWidth="1.300" /></Ico></button>
          <button aria-label="Close drawing"><Ico w={8} h={8}><path d="M1 1l5.500 6M6.500 1L1 7" stroke="#fff" strokeWidth="1.500" /></Ico></button>
        </div>
        <ViewCube />
        <NavBar />
      </div>
      <CommandLine />
    </main>
  );
}

/* ---------- bottom bars ---------- */

const ARROWS = [
  ["First layout", "M2.500 1v7M8.500 1v7L4 4.500z"],
  ["Previous layout", "M7 1v7L2.500 4.500z"],
  ["Next layout", "M2.500 1v7L7 4.500z"],
  ["Last layout", "M1.500 1v7L6 4.500zM7.500 1v7"],
];

const Slash = () => <Ico w={7} h={14}><path d="M0.500 13.500L6 0" stroke="#333" strokeWidth="1" /></Ico>;

function LayoutTabs() {
  return (
    <div className="flex h-[15px] bg-[#f0f0f0] pl-px font-['Liberation_Sans',sans-serif] text-[9px] leading-[15px] text-[#222]">
      {ARROWS.map(([name, d]) => (
        <button key={name} aria-label={name} className="flex w-[13px] items-center justify-center border-r border-[#c4c4c4]">
          <Ico w={9} h={9}><path d={d} fill="#555" strokeWidth="0.800" /></Ico>
        </button>
      ))}
      <button className="w-[46px] bg-[#212830] text-white [clip-path:polygon(0_0,100%_0,88%_100%,11%_100%)]">Model</button>
      <button className="w-9 text-center">Layout1</button>
      <Slash />
      <button className="w-[38px] text-center">Layout2</button>
      <Slash />
    </div>
  );
}

const TOGGLES = [
  ["INFER", "w-[31px]"],
  ["SNAP", "w-[28px]"],
  ["GRID", "w-[26px]", true],
  ["ORTHO", "w-[37px]"],
  ["POLAR", "w-[34px]"],
  ["OSNAP", "w-[35px]", true],
  ["3DOSNAP", "w-[47px]"],
  ["OTRACK", "w-[41px]", true],
  ["DUCS", "w-[29px]"],
  ["DYN", "w-[23px]"],
  ["LWT", "w-[25px]"],
  ["TPY", "w-[21px]"],
  ["QP", "w-[17px]", true],
  ["SC", "w-[16px]"],
  ["AM", "w-[17px]"],
];

const CELL = "flex h-full shrink-0 items-center justify-center border-l border-[#6f6f6f] bg-[#b9b9b9]";

function StatusBar() {
  return (
    <footer className="flex h-[15px] items-stretch border-t border-[#777] bg-linear-to-b from-[#8a8a8a] to-[#9a9a9a] pr-0.5 font-['Liberation_Sans',sans-serif] text-[9px] leading-[14px] text-[#222]">
      <output className="w-[129px] shrink-0 bg-linear-to-r from-[#a0a0a0] to-[#8b8b8b] pl-2 text-[8px] leading-[13px]">173.6615, 6.0901 , 0.0000</output>
      {TOGGLES.map(([name, w, on]) => (
        <button
          key={name}
          aria-pressed={!!on}
          className={`shrink-0 border-l border-[#777] text-center whitespace-nowrap ${w} ${on ? "bg-linear-to-b from-[#9fcfdc] to-[#c9edf5]" : "bg-[#b4b3b5]"}`}
        >
          {name}
        </button>
      ))}
      <span className="flex-1 border-l border-[#666]" />
      <button className={`${CELL} w-9`}>MODEL</button>
      <button aria-label="Quick view layouts" className={`${CELL} w-[15px]`}><Ico w={12} h={12}><rect x="2" y="1.500" width="8" height="7" fill="#e8e8e8" strokeWidth="1" /><path d="M1 10.500h10M4 3.500l3 3" /></Ico></button>
      <button aria-label="Quick view drawings" className={`${CELL} w-[15px]`}><Ico w={12} h={12}><path d="M1 1.500h4.500V6H1zM6.500 1.500H11V6H6.500z" fill="#e8e8e8" strokeWidth="1" /><path d="M0.500 8h11M.500 10h11" stroke="#333" /></Ico></button>
      <span className="w-[9px] shrink-0 border-l border-[#6f6f6f]" />
      <button className={`${CELL} w-[35px] gap-0.5`}>
        <Ico w={11} h={12}><path d="M5.500 1v6M5.500 1L4 7l-3 3.500L5.500 8l4.500 2.500L7 7z" fill="#e8e8e8" strokeWidth="1" /></Ico>
        1:1
        <Caret />
      </button>
      <button aria-label="Annotation visibility" className={`${CELL} w-[15px]`}><Ico w={12} h={12}><path d="M5 1L3.500 7 .8 10.500 5 8l4 2.500L6.500 7z" fill="#e8e8e8" strokeWidth="0.900" /><circle cx="9" cy="5" r="2.200" fill="#f3d878" stroke="#96803a" strokeWidth="0.700" /></Ico></button>
      <button aria-label="Annotation autoscale" className={`${CELL} w-[15px] opacity-70`}><Ico w={12} h={12}><path d="M5 1L3.500 7 .8 10.500 5 8l4 2.500L6.500 7zM7 1h3M9 3l-2 3" strokeWidth="0.900" /></Ico></button>
      <button aria-label="Workspace switching" className={`${CELL} ml-1 w-[15px]`}><Ico w={12} h={12}><circle cx="6" cy="6" r="4" fill="#eee" strokeWidth="0.900" /><circle cx="6" cy="6" r="5" strokeDasharray="2 1.140" strokeWidth="1.200" /><circle cx="6" cy="6" r="1.500" fill="#999" strokeWidth="0.800" /></Ico></button>
      <button aria-label="Toolbar lock" className={`${CELL} w-[15px]`}><Ico w={12} h={12}><rect x="1" y="5.500" width="6" height="5" fill="#eee" strokeWidth="1" /><path d="M6 5V3c0-2.500 4-2.500 4 0v3" strokeWidth="1" /></Ico></button>
      <button aria-label="Hardware acceleration" className={`${CELL} w-[15px]`}><Ico w={12} h={12}><rect x="1" y="2.500" width="8" height="4.500" fill="#888" strokeWidth="0.900" /><path d="M2 8.500h6" strokeDasharray="1 1" /><circle cx="9.500" cy="7" r="2" fill="#f6b765" stroke="#96803a" strokeWidth="0.700" /></Ico></button>
      <span className={`${CELL} w-[30px] gap-1`}>
        <Ico w={12} h={12}><circle cx="4.500" cy="4" r="3.300" fill="#4ca04a" stroke="#2c6b2b" strokeWidth="0.600" /><circle cx="8" cy="8" r="2.800" fill="#dcc040" stroke="#8c7520" strokeWidth="0.600" /></Ico>
        <Ico w={9} h={12}><path d="M3 9.500C3 7.500 1 7 1 4.500a3.400 3.400 0 0 1 6.800 0c0 2.500-2 3-2 5z" fill="#fff3c0" stroke="#9a8538" strokeWidth="0.800" /></Ico>
      </span>
      <button aria-label="Status bar menu" className={`${CELL} ml-1 w-2`}><Caret /></button>
      <button aria-label="Clean screen" className={`${CELL} w-3.5`}><Ico w={11} h={11}><rect x="1" y="1.500" width="9" height="8" fill="#f4f4f4" strokeWidth="1" /><path d="M1 3h9" stroke="#333" strokeWidth="1.500" /></Ico></button>
    </footer>
  );
}

export default function App() {
  return (
    <div className="flex min-h-screen flex-col bg-black py-4 font-['Open_Sans','Noto_Sans',sans-serif]">
      <div className="relative">
        <TitleBar />
        <MenuTabs />
        <button
          aria-label="Application menu"
          className="absolute top-px left-px flex h-[26px] w-[27px] items-center justify-between border border-[#4c4c4c] bg-linear-to-b from-[#b4b4b4] to-[#858585] pr-0.5"
        >
          <svg width="18" height="22" viewBox="0 0 18 22" aria-hidden="true">
            <path d="M1 19L5 2.500l6-1L17 16l-4 2-2-4.500-4 1L5 19z" fill="#b81a1a" />
            <path d="M5 2.500l4-.6L5.500 17.500 1 19z" fill="#ea5148" />
            <path d="M9 1.900l2-.4L17 16l-3 .8z" fill="#d93a34" />
            <path d="M8.800 6.500l2 4.500-3.300 1z" fill="#7d0f10" />
            <path d="M1 19l4.500-1.500.5 1.500-4 1.500zM12.500 17l4.500-1v1.500l-4 2z" fill="#6d0b0c" />
          </svg>
          <Caret />
        </button>
      </div>
      <Ribbon />
      <Canvas />
      <LayoutTabs />
      <StatusBar />
    </div>
  );
}
